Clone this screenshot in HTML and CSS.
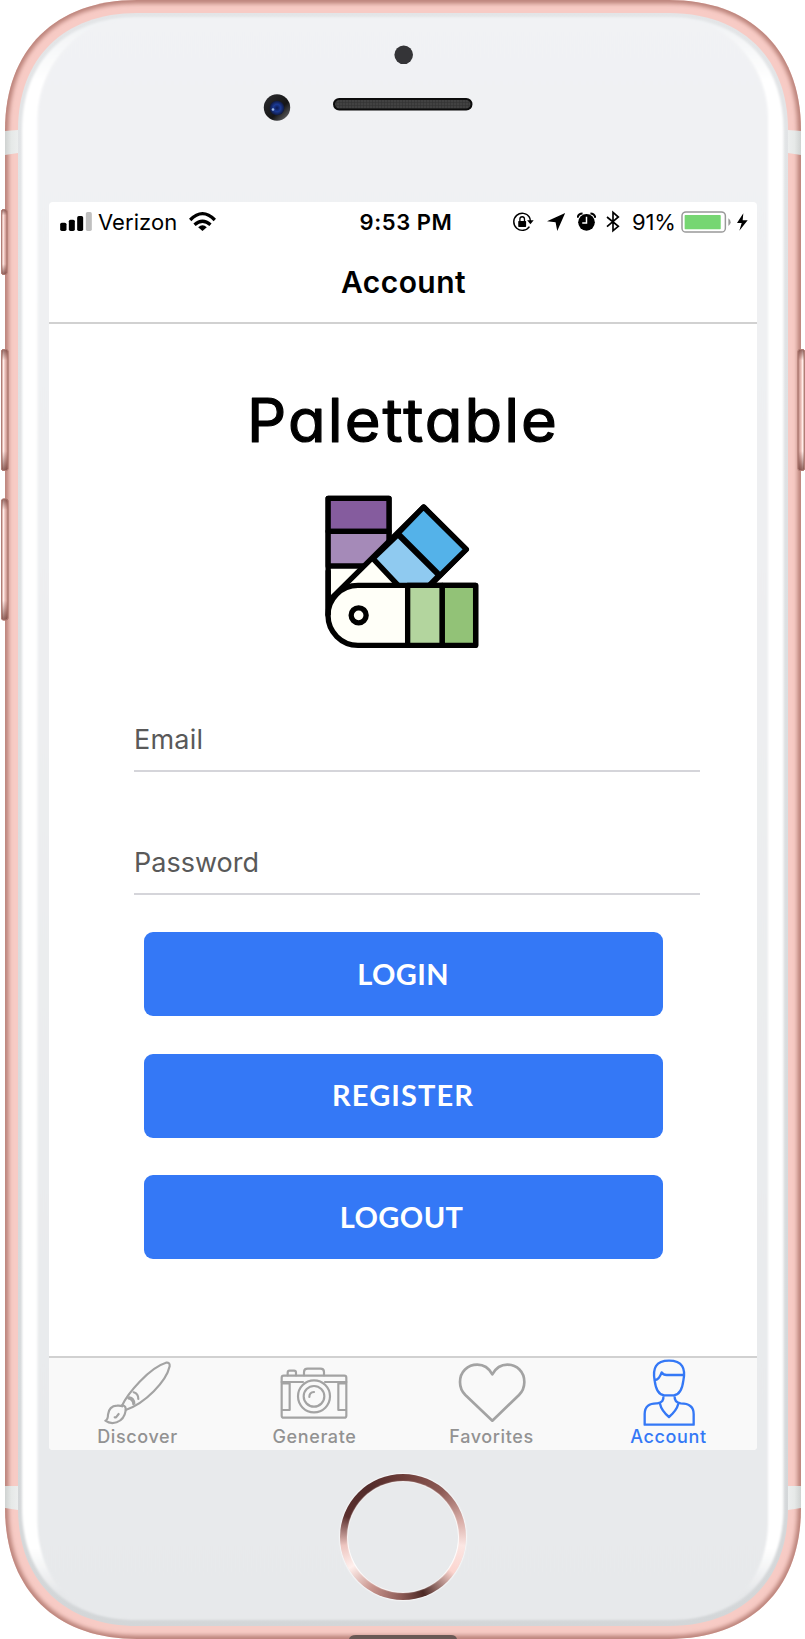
FILE: index.html
```html
<!DOCTYPE html>
<html lang="en">
<head>
<meta charset="utf-8">
<title>Palettable – Account</title>
<link rel="stylesheet" href="styles.css">
</head>
<body>
<div class="phone">
  <svg class="chassis" viewBox="0 0 805 1639" aria-hidden="true">
    <defs>
      <linearGradient id="face" x1="0" y1="0" x2="0" y2="1"><stop offset="0" stop-color="#f1f2f4"/><stop offset="1" stop-color="#e7e9eb"/></linearGradient>
      <linearGradient id="rim" x1="0" y1="0" x2="0" y2="1"><stop offset="0" stop-color="#e3e5e7"/><stop offset="1" stop-color="#d3d6d8"/></linearGradient>
      <linearGradient id="gloss" x1="0" y1="0" x2="0" y2="1"><stop offset="0" stop-color="#eff1f3"/><stop offset=".04" stop-color="#fff"/><stop offset=".955" stop-color="#fff"/><stop offset=".982" stop-color="#e6e8ea"/></linearGradient>
      <linearGradient id="key" x1="0" y1="0" x2="1" y2="0"><stop offset="0" stop-color="#b98279"/><stop offset=".3" stop-color="#fff0ec"/><stop offset=".5" stop-color="#f1c6c0"/><stop offset="1" stop-color="#b98279"/></linearGradient>
      <linearGradient id="keyEnds" x1="0" y1="0" x2="0" y2="1"><stop offset="0" stop-color="#6a3731" stop-opacity=".7"/><stop offset=".09" stop-color="#6a3731" stop-opacity="0"/><stop offset=".84" stop-color="#6a3731" stop-opacity="0"/><stop offset="1" stop-color="#6a3731" stop-opacity=".75"/></linearGradient>
      <linearGradient id="band" x1="0" y1="0" x2="1" y2="0"><stop offset="0" stop-color="#cfd2d1"/><stop offset=".5" stop-color="#e6e9e8"/><stop offset="1" stop-color="#eceeee"/></linearGradient>
      <radialGradient id="lens" cx=".5" cy=".5" r=".5"><stop offset="0" stop-color="#0b1950"/><stop offset=".5" stop-color="#1b3a94"/><stop offset="1" stop-color="#10193e"/></radialGradient>
      <linearGradient id="barrel" x1="0" y1="0" x2="1" y2="1"><stop offset="0" stop-color="#2d2d2f"/><stop offset=".6" stop-color="#161617"/><stop offset="1" stop-color="#77777a"/></linearGradient>
      <pattern id="mesh" width="3" height="3" patternUnits="userSpaceOnUse"><rect width="3" height="3" fill="#424242"/><path d="M0 0V3M0 0H3" stroke="#303030"/></pattern>
      <filter id="soft" x="-5%" y="-5%" width="110%" height="110%"><feGaussianBlur stdDeviation="2"/></filter>
      <filter id="hint" x="-5%" y="-5%" width="110%" height="110%"><feGaussianBlur stdDeviation=".8"/></filter>
      <clipPath id="shell"><path d="M5 130C5 50 55 0 137 0H669C751 0 801 50 801 130V1508C801 1589 751 1639 669 1639H137C55 1639 5 1589 5 1508Z"/></clipPath>
      <clipPath id="glass"><path d="M18 130C18 58 64 13 137 13H669C742 13 788 58 788 130V1508C788 1581 742 1626 669 1626H137C64 1626 18 1581 18 1508Z"/></clipPath>
    </defs>
    <g clip-path="url(#shell)">
      <rect width="805" height="1639" fill="#f7cbc5"/>
      <path filter="url(#soft)" fill="none" stroke="#b98178" stroke-width="7" d="M5 130C5 50 55 0 137 0H669C751 0 801 50 801 130V1508C801 1589 751 1639 669 1639H137C55 1639 5 1589 5 1508Z"/>
      <path fill="url(#band)" d="M5 131L18 130V153L5 155ZM5 1486H18V1510L5 1508Z"/>
      <path fill="url(#band)" transform="matrix(-1 0 0 1 806 0)" d="M5 131L18 130V153L5 155ZM5 1486H18V1510L5 1508Z"/>
      <path d="M349 1639Q350 1635 356 1635H451Q456 1635 457 1639Z" fill="#6a5955"/>
    </g>
    <g clip-path="url(#glass)">
      <rect width="805" height="1639" fill="url(#rim)"/>
      <path filter="url(#hint)" fill="url(#gloss)" d="M22 130C22 62 66 17 137 17H669C740 17 783.500 62 783.500 130V1508C783.500 1576 740 1620 669 1620H137C66 1620 22 1576 22 1508Z"/>
      <path filter="url(#hint)" fill="url(#face)" d="M37.500 118C38 66 78 19 130 19H676C728 19 768 66 768 118V1520C768 1572 740 1618 676 1618H130C66 1618 37.500 1572 37.500 1520Z"/>
    </g>
    <g stroke="#b27e76" stroke-width="1">
      <rect x="1.500" y="209.500" width="5.500" height="65" rx="2" fill="url(#key)"/><rect x="1.500" y="209.500" width="5.500" height="65" rx="2" fill="url(#keyEnds)"/>
      <rect x="1.500" y="349.500" width="6.500" height="121" rx="2" fill="url(#key)"/><rect x="1.500" y="349.500" width="6.500" height="121" rx="2" fill="url(#keyEnds)"/>
      <rect x="1.500" y="499" width="6.500" height="121" rx="2" fill="url(#key)"/><rect x="1.500" y="499" width="6.500" height="121" rx="2" fill="url(#keyEnds)"/>
      <g transform="matrix(-1 0 0 1 806 0)"><rect x="1.500" y="349.500" width="6.500" height="121" rx="2" fill="url(#key)"/><rect x="1.500" y="349.500" width="6.500" height="121" rx="2" fill="url(#keyEnds)"/></g>
    </g>
    <circle cx="403.700" cy="54.800" r="9.300" fill="#343437"/>
    <circle cx="277" cy="107.500" r="13.200" fill="url(#barrel)"/>
    <circle cx="277" cy="108" r="7.300" fill="url(#lens)"/>
    <circle cx="273" cy="109.500" r="1.300" fill="#9bb8e6"/>
    <rect x="334" y="99" width="137.500" height="10.500" rx="5.200" fill="url(#mesh)" stroke="#0c0c0c" stroke-width="2"/>
  </svg>

  <main class="screen">
    <div class="status">
      <div class="status-left">
        <svg class="signal" viewBox="180 630 95 72"><rect x="180" y="668" width="19" height="25" rx="5"/><rect x="206" y="659" width="18" height="34" rx="5"/><rect x="231" y="648" width="18" height="45" rx="5"/><rect x="257" y="636" width="18" height="57" rx="5" fill="#bfbfbf"/></svg>
        <span class="carrier">Verizon</span>
        <svg class="wifi" viewBox="569 630 80 72"><g fill="none" stroke="#000" stroke-width="10"><path d="M572 660Q609 622 646 660"/><path d="M585 674Q609 653 633 674"/></g><path d="M596 682Q609 670 622 682L609 693Z"/></svg>
      </div>
      <span class="time">9:53 PM</span>
      <div class="status-right">
        <svg class="lock" viewBox="320 630 67 72"><path d="M373 651A26 26 0 1 0 373 680M372 650Q376 655 376 664" fill="none" stroke="#000" stroke-width="4.500"/><path d="M366 661H386L376 673Z"/><rect x="339" y="663" width="24" height="18" rx="2"/><path d="M344 664V657Q344 650 351 650Q358 650 358 657V664" fill="none" stroke="#000" stroke-width="4"/></svg>
        <svg class="arrow" viewBox="424 630 56 72"><path d="M479 639L455 693L450 667L424 664Z"/></svg>
        <svg class="alarm" viewBox="514 630 58 72"><circle cx="543" cy="667" r="25.500"/><path d="M516 653Q517 641 531 640M555 640Q568 641 570 653" fill="none" stroke="#000" stroke-width="6"/><path d="M543 650V669H530" fill="none" stroke="#fff" stroke-width="4.500"/></svg>
        <svg class="bluetooth" viewBox="602 630 42 72"><path d="M605 651L639 679L623 692V637L639 651L605 680" fill="none" stroke="#000" stroke-width="5"/></svg>
        <span class="percent">91%</span>
        <svg class="battery" viewBox="829 630 151 72"><rect x="832" y="635.500" width="131" height="61" rx="12" fill="#fff" stroke="#999" stroke-width="4.500"/><rect x="840" y="645" width="109" height="43" rx="2" fill="#76d672"/><path d="M972 655Q979 660 979 667Q979 674 972 678Z" fill="#999"/></svg>
        <svg class="bolt" viewBox="996 630 33 72"><path d="M1015 640L996 669H1010L1003 692L1028 661H1013Z"/></svg>
      </div>
    </div>
    <h1 class="title">Account</h1>

    <section class="account">
      <svg class="wordmark" viewBox="0 0 330 80" role="img"><text x="9" y="61" textLength="312" lengthAdjust="spacingAndGlyphs">Palettable</text></svg>
      <svg class="swatches" viewBox="70 68 472 472" stroke="#000" stroke-width="16" stroke-linejoin="round">
        <path fill="#fffff8" d="M85.500 435V84H268V345Z"/>
        <path fill="#855c9e" d="M85.500 84H268V183H85.500Z"/>
        <path fill="#a58ab8" d="M85.500 183H268V287H85.500Z"/>
        <path fill="#fffff8" d="M92 387L372 110L500 237L380 357L140 420Z"/>
        <path fill="#8fcaf0" d="M220 265L295 193L418 315L380 354H304Z"/>
        <path fill="#54b2e9" d="M295 189L372 110L500 237L421 315Z"/>
        <path fill="#fffff8" d="M175 345H528V525H175A90 90 0 0 1 175 345Z"/>
        <path fill="#b3d59e" d="M324 345H428V525H324Z"/>
        <path fill="#92c277" d="M428 345H528V525H428Z"/>
        <path fill="none" d="M85.500 435V300"/>
        <circle cx="177" cy="435" r="22.500" fill="#fffff8"/>
      </svg>
      <form class="form">
        <div class="field">Email</div>
        <div class="field">Password</div>
        <button type="button" class="button login">LOGIN</button>
        <button type="button" class="button register">REGISTER</button>
        <button type="button" class="button logout">LOGOUT</button>
      </form>
    </section>

    <nav class="tabs">
      <a class="tab discover">
        <svg viewBox="308 57 210 201"><path d="M368 197C385 160 450 83 500 68Q512 66 511 79C501 124 438 190 379 210"/><path d="M387 175Q402 178 402 193M403 157Q417 161 417 177M390 172Q404 174 405 191M369 195Q381 198 379 212Q375 239 352 247Q333 253 318 242Q326 239 326 224Q329 198 353 197Q363 196 369 199M346 232H350L358 222"/></svg>
        <span>Discover</span>
      </a>
      <a class="tab generate">
        <svg viewBox="838 57 210 201"><rect x="846" y="107" width="194" height="126" rx="6"/><path d="M846 126H910M976 126H1040M913 106V96Q913 86 924 86H962Q973 86 973 96V106M864 106V98Q864 92 870 92H883Q889 92 889 98V106M848 130H870V210H848M1038 130H1016V210H1038"/><circle cx="943" cy="169" r="48"/><circle cx="943" cy="169" r="31"/><path d="M929 171Q929 157 943 156"/></svg>
        <span>Generate</span>
      </a>
      <a class="tab favorites">
        <svg viewBox="155 57 210 201"><path d="M261 242L180 165Q164 149 164 126C164 95 187 74 216 74Q245 74 261 103Q277 74 306 74C335 74 357 95 357 126Q357 149 341 165Z" stroke-width="8"/></svg>
        <span>Favorites</span>
      </a>
      <a class="tab current">
        <svg viewBox="685 57 210 201"><path d="M747 122C740 85 750 62 790 62S841 85 833 122Q828 164 804 166H776Q752 164 747 122ZM749 120Q760 119 768 97Q773 105 783 105H832M773 167Q776 187 755 190Q717 189 717 222V254H864V222Q864 190 825 190Q805 187 807 167M763 191Q767 211 790 231Q813 211 818 191"/></svg>
        <span>Account</span>
      </a>
    </nav>
  </main>
  <div class="home"></div>
</div>
</body>
</html>
```
FILE: styles.css
```css
* { box-sizing: border-box; }
body { margin: 0; background: #fff; font-family: Inter, "Liberation Sans", sans-serif; color: #000; }
svg { display: block; flex: none; }
.phone { position: relative; width: 805px; height: 1639px; overflow: hidden; display: flex; flex-direction: column; padding: 202px 48px 0 49px; }
.chassis { position: absolute; left: 0; top: 0; width: 805px; height: 1639px; }
.screen { position: relative; display: flex; flex-direction: column; width: 708px; height: 1248px; background: #fff; border-radius: 4px; overflow: hidden; }

.status { display: flex; align-items: center; height: 40px; padding: 0 9px 0 11px; font-size: 22px; white-space: nowrap; }
.status svg { height: 24px; }
.status-left, .status-right { flex: 1 1 0; display: flex; align-items: center; }
.status-right { justify-content: flex-end; }
.signal { width: 32px; }
.carrier { width: 79px; margin: 0 12px 0 6px; letter-spacing: .05px; }
.wifi { width: 27px; }
.time { width: 94px; margin-left: 4px; font-weight: 600; font-size: 22px; letter-spacing: .55px; display: flex; justify-content: center; }
.lock { width: 22px; margin-right: 13px; }
.arrow { width: 18.500px; margin-right: 11.500px; }
.alarm { width: 19px; margin-right: 10px; }
.bluetooth { width: 14px; margin-right: 12px; }
.percent { width: 44px; margin-right: 5px; letter-spacing: -.2px; }
.battery { width: 50px; margin-right: 6px; }
.bolt { width: 11px; }

.title { margin: 0; height: 82px; padding-left: 1px; border-bottom: 2px solid #d1d1d1; text-align: center; font-size: 30px; font-weight: 600; line-height: 80px; letter-spacing: .45px; }

.account { flex: 1; display: flex; flex-direction: column; align-items: center; padding-top: 57px; }
.wordmark { width: 330px; height: 80px; }
.wordmark text { font: 400 60px Inter, sans-serif; font-feature-settings: "cv11"; letter-spacing: 2px; stroke: #000; stroke-width: 1.200px; stroke-linejoin: round; }
.swatches { width: 157.300px; height: 157.300px; margin: 31.700px 2.400px 0 0; }
.form { width: 566px; margin: 58px 0 0 28px; display: flex; flex-direction: column; }
.field { height: 123px; padding: 74px 0 0 0; border-bottom: 2px solid #d5d5da; font-size: 27px; line-height: 34px; color: #595959; }
.field:first-child { height: 64px; padding: 15px 0 0; letter-spacing: .2px; }
.button { display: block; width: 519px; height: 84px; margin: 37.400px 0 0 9.600px; padding: 0 0 2px; border: 0; border-radius: 9px; background: #3478f6; color: #fff; font: 700 29px Lato, sans-serif; }
.login { letter-spacing: .4px; }
.register { letter-spacing: 1.100px; }
.logout { letter-spacing: .4px; padding-right: 3px; }

.tabs { display: flex; height: 94px; border-top: 2px solid #d1d1d1; background: #f9f9f9; }
.tab { width: 177px; display: flex; flex-direction: column; align-items: center; padding-top: 1px; color: #929292; font-size: 18px; font-weight: 500; line-height: 21px; letter-spacing: .6px; }
.tab svg { width: 70px; height: 67px; margin-right: 1px; fill: none; stroke: #a3a3a3; stroke-width: 6.500; stroke-linejoin: round; stroke-linecap: round; }
.tab.favorites svg { margin-right: 0; }
.tab.current { color: #3478f6; }
.tab.current svg { margin-right: 0; stroke: #3478f6; stroke-width: 7; }

.home { position: relative; width: 126px; height: 126px; margin: 24px 0 0 291px; border-radius: 50%; background: conic-gradient(#6d3d39, #8d5a55 40deg, #d9aea8 75deg, #fbe6e3 98deg, #fcd5cf 125deg, #4d2925 160deg, #8d5b56 182deg, #c9958e 212deg, #fff0ed 240deg, #edc5c0 262deg, #5a2f2d 290deg, #522b2a 325deg, #6d3d39); box-shadow: 0 0 1px 1px #f6f6f7; }
.home::after { content: ""; position: absolute; inset: 8px; border-radius: 50%; background: #e8eaec; box-shadow: 0 0 1px 1px #fff; }
```
